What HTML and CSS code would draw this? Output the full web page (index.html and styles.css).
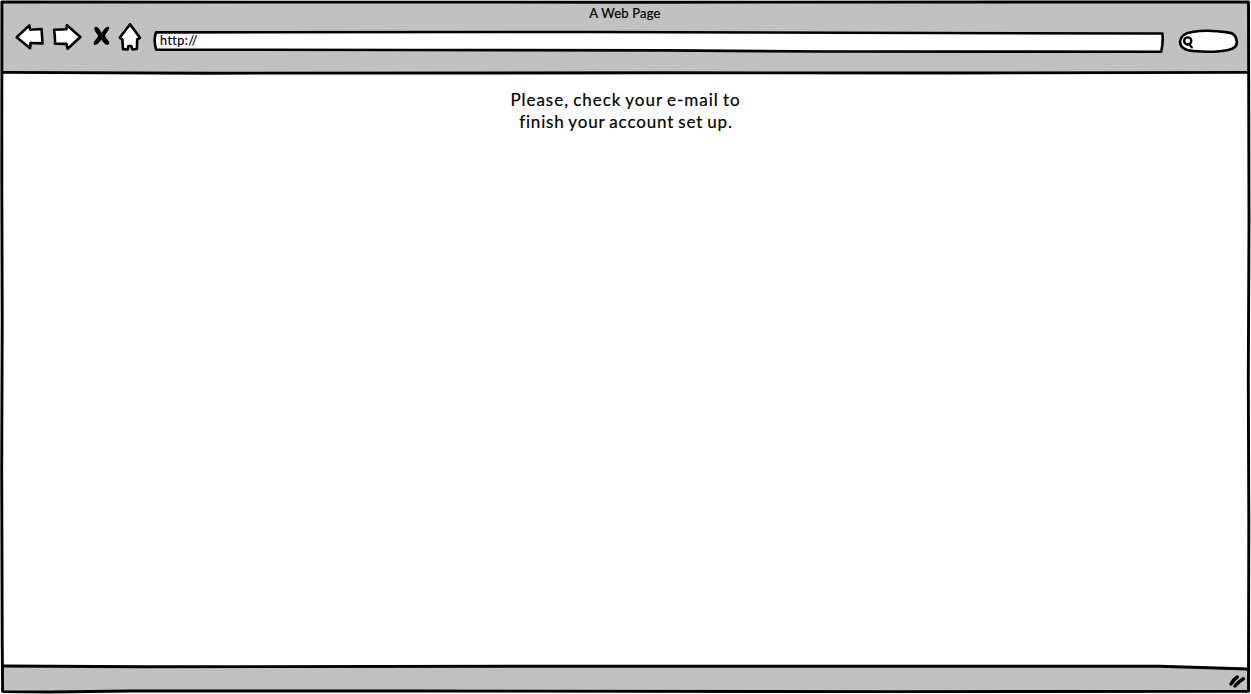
FILE: index.html
```html
<!DOCTYPE html>
<html lang="en">
<head>
<meta charset="utf-8">
<title>A Web Page</title>
<link rel="stylesheet" href="styles.css">
</head>
<body>
<div class="browser">
  <svg class="frame" viewBox="0 0 1251 694" aria-hidden="true">
    <path class="chrome" d="M3 2H1249V72H3Z"/>
    <path class="chrome" d="M3 666.5H1160L1249 669V691.5H3Z"/>
    <path class="line" d="M1.9 2 L620 2.2 L1248.5 2 L1249 220 L1248.3 380 L1248.8 520 L1248.5 691.3 L900 691.6 L420 691 L130 691 L50 692 L2.6 691.6 L2.2 640 L1.7 470 L2.2 320 L1.8 180 Z"/>
    <path class="line" d="M3 72.4 L208 73.2 L670 72.8 L950 73 L1247 72.4"/>
    <path class="line" d="M3 666 L145 666.8 L600 666.2 L1160 666.3 L1248 669"/>
  </svg>
  <header class="header">
    <div class="title">A Web Page</div>
    <nav class="toolbar">
      <svg class="icon arrow" viewBox="0 0 30 30"><path d="M1.7 16.3 L14.3 4.4 L15.2 8.8 L26.6 8 L27.5 22.4 L15.5 22 L15.1 27.2 Z"/></svg>
      <svg class="icon arrow next" viewBox="0 0 30 30"><path d="M2 8.8 L14.4 8.2 L15 4.3 L28.4 16 L15.6 27.8 L14.5 22.9 L3 22.7 Q3.2 15 2 8.8 Z"/></svg>
      <svg class="icon stop" viewBox="0 0 18 22"><path d="M1.7 1.2 C4.4-.3 6.4 3 8.8 7 C10.8 3.4 13 .3 15.4 .8 C18 2.2 13.6 6.2 12 9.8 C13.6 13.6 18 15.8 15.6 18.6 C12.8 20.3 10.8 17 8.5 13.8 C6 16.8 2.8 20.5 .9 18.4 C-.4 16.2 3.4 13 5.3 10 C3.8 7-.2 4 1.7 1.2Z"/></svg>
      <svg class="icon home" viewBox="0 0 24 30"><path d="M12 2.3 L22 15.8 L19.3 17.4 L18.8 27 L14.4 27.4 L13.4 24 L10.4 24 L9.6 27.4 L5 27.2 L4.4 17.6 L1.7 15.7 Z"/></svg>
      <div class="address">
        <svg class="outline" viewBox="0 0 1012 22"><path d="M3 2.4 L430 2 L690 2.8 L1009.4 3.5 Q1010.4 11 1008.2 21.8 L670 21.5 L510 20.4 L260 20 L3.2 19.6 Q.2 10 3 2.4Z"/></svg>
        <span class="url">http://</span>
      </div>
      <svg class="icon search" viewBox="0 0 62 26"><path d="M14 4 Q29 1.2 50 4.4 Q58.3 5.3 58.8 13.5 Q59.5 20 50 22 Q37 25 15 23 Q2.4 22.2 2 13.5 Q3 5.6 14 4Z"/><circle class="lens" cx="9.7" cy="12.9" r="3.6"/><path class="handle" d="M9 16.4 Q12.6 15 12 17.2 L13.8 19.4"/></svg>
    </nav>
  </header>
  <main class="content">
    <p class="message first">Please, check your e-mail to</p>
    <p class="message second">finish your account set up.</p>
  </main>
  <footer class="footer">
    <svg class="grip" viewBox="0 0 18 16"><path d="M3 11 Q5 7 9.2 4 M7 13 Q10.5 8.8 15.4 5.8"/></svg>
  </footer>
</div>
</body>
</html>
```
FILE: styles.css
```css
* { box-sizing: border-box; }
body { margin: 0; background: #fff; color: #000; font-family: Lato, sans-serif; overflow: hidden; -webkit-text-stroke: .2px #000; }
svg { display: block; fill: none; stroke: #000; stroke-linejoin: round; stroke-linecap: round; }
.browser { position: relative; isolation: isolate; width: 1251px; height: 694px; display: grid; grid-template-rows: 73px 1fr 26px; }
.frame { position: absolute; inset: 0; z-index: -1; width: 1251px; height: 694px; }
.chrome { fill: #c1c1c1; stroke: none; }
.line { stroke-width: 2.9; }
.header { padding: 5px 11px 0 15px; }
.title { height: 16px; line-height: 16px; font-size: 13px; text-align: center; padding-right: 5px; letter-spacing: .2px; }
.toolbar { display: flex; align-items: flex-start; }
.icon { flex: none; }
.icon path { fill: #fff; stroke-width: 2.6; }
.arrow { width: 30px; height: 30px; }
.next { margin-left: 7px; }
.icon.stop { width: 18px; height: 22px; margin: 5px 0 0 11px; }
.icon.stop path { fill: #000; stroke: none; }
.home { width: 24px; height: 30px; margin: 1px 0 0 7px; }
.address { position: relative; width: 1012px; height: 22px; margin: 9px 0 0 11px; padding-left: 7px; }
.outline { position: absolute; inset: 0; width: 1012px; height: 22px; overflow: visible; }
.outline path { fill: #fff; stroke-width: 2.6; }
.url { position: relative; display: block; font-size: 12.5px; line-height: 22px; letter-spacing: .5px; }
.search { width: 62px; height: 26px; margin: 7px 0 0 13px; }
.search .lens { stroke-width: 2.3; }
.icon.search .handle { fill: none; stroke-width: 2.2; }
.content { padding-top: 16px; text-align: center; }
.message { margin: 0; font-size: 17px; line-height: 22px; word-spacing: -1px; }
.first { letter-spacing: .97px; }
.second { letter-spacing: .83px; padding-left: 1px; }
.footer { display: flex; justify-content: flex-end; padding: 5px 5px 0 0; }
.grip { width: 18px; height: 16px; stroke-width: 3.5; }
```
